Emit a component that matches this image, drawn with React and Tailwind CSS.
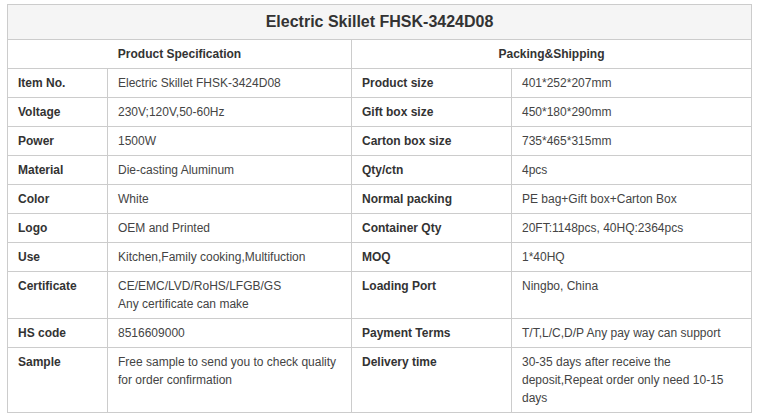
import React from "react";

const left = [
  ["Item No.", ["Electric Skillet FHSK-3424D08"]],
  ["Voltage", ["230V;120V,50-60Hz"]],
  ["Power", ["1500W"]],
  ["Material", ["Die-casting Aluminum"]],
  ["Color", ["White"]],
  ["Logo", ["OEM and Printed"]],
  ["Use", ["Kitchen,Family cooking,Multifuction"]],
  ["Certificate", ["CE/EMC/LVD/RoHS/LFGB/GS", "Any certificate can make"]],
  ["HS code", ["8516609000"]],
  ["Sample", ["Free sample to send you to check quality for order confirmation"]],
];

const right = [
  ["Product size", "401*252*207mm"],
  ["Gift box size", "450*180*290mm"],
  ["Carton box size", "735*465*315mm"],
  ["Qty/ctn", "4pcs"],
  ["Normal packing", "PE bag+Gift box+Carton Box"],
  ["Container Qty", "20FT:1148pcs, 40HQ:2364pcs"],
  ["MOQ", "1*40HQ"],
  ["Loading Port", "Ningbo, China"],
  ["Payment Terms", "T/T,L/C,D/P Any pay way can support"],
  ["Delivery time", "30-35 days after receive the deposit,Repeat order only need 10-15 days"],
];

export default function App() {
  const n = left.length;
  return (
    <div
      className="w-[758px] h-[419px] bg-white pt-[4px] pl-[7px] text-[#333]"
      style={{ fontFamily: '"Liberation Sans", Arial, sans-serif' }}
    >
      <div className="w-[745px] border border-[#ccc]">
        <div className="bg-[#f5f5f5] border-b border-[#ccc] py-[5px] text-center text-[16px] leading-[24px] font-bold">
          Electric Skillet FHSK-3424D08
        </div>
        <div className="grid grid-cols-[100px_244px_160px_239px] text-[12px] leading-[18px]">
          <div className="col-span-2 border-r border-b border-[#ccc] py-[5px] text-center font-bold">
            Product Specification
          </div>
          <div className="col-span-2 border-b border-[#ccc] py-[5px] text-center font-bold">
            Packing&amp;Shipping
          </div>
          {left.map((row, i) => {
            const last = i === n - 1;
            const b = last ? "" : "border-b";
            return (
              <React.Fragment key={i}>
                <div className={`${b} border-r border-[#ccc] px-[10px] py-[5px] font-bold`}>{row[0]}</div>
                <div className={`${b} border-r border-[#ccc] px-[10px] py-[5px] text-[#444]`}>
                  {row[1].map((t, j) => (
                    <div key={j}>{t}</div>
                  ))}
                </div>
                <div className={`${b} border-r border-[#ccc] px-[10px] py-[5px] font-bold`}>{right[i][0]}</div>
                <div className={`${b} border-[#ccc] px-[10px] py-[5px] text-[#444]`}>{right[i][1]}</div>
              </React.Fragment>
            );
          })}
        </div>
      </div>
    </div>
  );
}
